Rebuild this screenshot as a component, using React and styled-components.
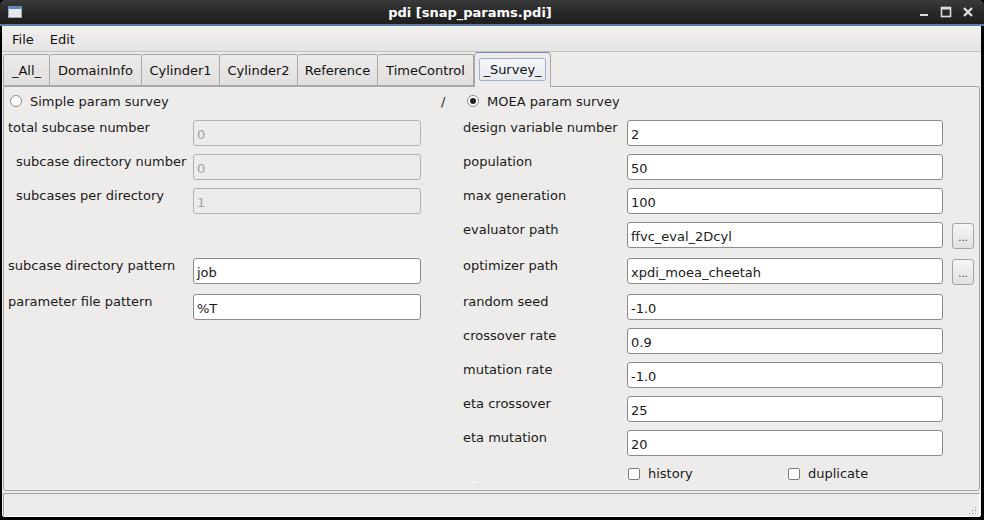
import React from "react";
import styled, { createGlobalStyle } from "styled-components";

const Global = createGlobalStyle`
  html, body { margin: 0; padding: 0; background: #000; }
  body { font-family: "DejaVu Sans", "Liberation Sans", sans-serif; font-size: 13px; color: #1a1a1a; }
  * { box-sizing: border-box; }
`;

const Window = styled.div`
  width: 984px;
  height: 520px;
  display: flex;
  flex-direction: column;
  background: #000;
  padding: 0 3px 4px 2px;
  overflow: hidden;
`;

const TitleBar = styled.div`
  height: 26px;
  flex: none;
  margin: 0 -3px 0 -2px;
  border-radius: 5px 5px 0 0;
  background: linear-gradient(#3a3a3a, #262626 60%, #1e1e1e);
  border-bottom: 2px solid #5a7aa0;
  display: flex;
  align-items: center;
  color: #fff;
`;

const AppIcon = styled.div`
  width: 14px;
  height: 12px;
  margin-left: 8px;
  border: 1px solid #9ab;
  border-top: 3px solid #5b86c4;
  background: #e8e8e8;
  flex: none;
`;

const Title = styled.div`
  flex: 1;
  text-align: center;
  font-weight: bold;
  font-size: 13px;
  padding-top: 1px;
`;

const Controls = styled.div`
  display: flex;
  gap: 10px;
  align-items: center;
  margin-right: 10px;
`;

const Body = styled.div`
  flex: 1;
  background: #edeceb;
  display: flex;
  flex-direction: column;
  min-height: 0;
`;

const MenuBar = styled.div`
  height: 26px;
  flex: none;
  display: flex;
  align-items: center;
  padding-left: 2px;
  padding-top: 1px;
  background: linear-gradient(#f1f0ef, #e5e4e2);
  border-bottom: 1px solid #c3c2c0;
`;

const MenuItem = styled.div`
  padding: 0 8px;
  font-size: 13px;
  color: #111;
`;

const TabBar = styled.div`
  display: flex;
  align-items: flex-end;
  padding-left: 1px;
  height: 34px;
  flex: none;
  position: relative;
  z-index: 1;
`;

const Tab = styled.div`
  width: ${(p) => p.$w}px;
  height: ${(p) => (p.$active ? "35px" : "32px")};
  margin-bottom: ${(p) => (p.$active ? "-1px" : "0")};
  padding: ${(p) => (p.$active ? "3px 4px 4px" : "1px 0 0")};
  display: flex;
  align-items: center;
  justify-content: center;
  border: 1px solid #a9a8a6;
  border-left-width: ${(p) => (p.$first || p.$active ? "1px" : "0")};
  border-bottom: ${(p) => (p.$active ? "none" : "1px solid #a9a8a6")};
  border-top-color: ${(p) => (p.$active ? "#6f8fb8" : "#a9a8a6")};
  border-radius: ${(p) => (p.$active ? "4px 4px 0 0" : "2px 2px 0 0")};
  background: ${(p) => (p.$active ? "#edeceb" : "linear-gradient(#ecebe9, #e1e0de)")};
  color: #111;
  white-space: nowrap;
`;

const FocusLabel = styled.div`
  border: 1px solid #9db3d0;
  border-radius: 2px;
  padding: 3px 3px;
  background: linear-gradient(#f3f5f8, #e7ebf0);
`;

const Pane = styled.div`
  margin: 0 1px 0 1px;
  height: 405px;
  flex: none;
  border: 1px solid #a9a8a6;
  border-radius: 0 3px 3px 3px;
  display: grid;
  grid-template-columns: 185px 228px 20px 22px 164px 316px 9px 22px;
  grid-template-rows: 32px 34px 34px 34px 36px 36px 34px 34px 34px 34px 34px 1fr;
  padding-left: 4px;
  padding-top: 1px;
`;

const Cell = styled.div`
  grid-column: ${(p) => p.$col};
  grid-row: ${(p) => p.$row};
  display: flex;
  align-items: flex-start;
  padding-left: ${(p) => p.$indent || 0}px;
  white-space: nowrap;
`;

const Header = styled(Cell)`
  align-items: center;
  padding-top: 2px;
  height: 22px;
  box-sizing: content-box;
`;

const Label = styled(Cell)`
  color: #1a1a1a;
`;

const Input = styled.div`
  width: ${(p) => p.$w}px;
  height: 26px;
  border: 1px solid ${(p) => (p.$disabled ? "#b4b3b1" : "#8c8b89")};
  border-radius: 3px;
  background: ${(p) => (p.$disabled ? "#edeceb" : "#fff")};
  color: ${(p) => (p.$disabled ? "#a3a2a0" : "#1a1a1a")};
  display: flex;
  align-items: center;
  padding: 2px 0 0 3px;
  font-size: 13px;
`;

const DotButton = styled.div`
  width: 22px;
  height: 26px;
  margin-top: 1px;
  border: 1px solid #a5a4a2;
  border-radius: 3px;
  background: linear-gradient(#f6f6f5, #e2e1df);
  display: flex;
  align-items: center;
  justify-content: center;
  font-size: 10px;
  color: #333;
  padding-top: 3px;
`;

const RadioCircle = styled.span`
  width: 12px;
  height: 12px;
  border-radius: 50%;
  border: 1px solid #8a8988;
  background: #fff;
  display: inline-flex;
  align-items: center;
  justify-content: center;
  margin-right: 8px;
  flex: none;
  &::after {
    content: "";
    width: 6px;
    height: 6px;
    border-radius: 50%;
    background: ${(p) => (p.$checked ? "#222" : "transparent")};
  }
`;

const Check = styled.span`
  width: 12px;
  height: 12px;
  border: 1px solid #7f7e7c;
  border-radius: 2px;
  background: #fff;
  margin-right: 8px;
  flex: none;
`;

const CheckRow = styled.div`
  grid-column: 6 / 9;
  grid-row: 12;
  display: flex;
  align-items: flex-start;
  padding-top: 2px;
  padding-left: 1px;
  position: relative;
`;

const CheckItem = styled.div`
  display: flex;
  align-items: center;
  width: ${(p) => p.$w}px;
`;

const Tick = styled.span`
  position: absolute;
  left: -156px;
  top: 18px;
  width: 6px;
  height: 1px;
  background: #fff;
`;

const StatusBar = styled.div`
  margin: 2px 1px 0 1px;
  height: 24px;
  flex: none;
  border: 1px solid #a3a2a0;
  border-right-color: #fff;
  border-bottom-color: #fff;
  position: relative;
`;

const Grip = styled.svg`
  position: absolute;
  right: 2px;
  bottom: 1px;
`;

const rightRows = [
  ["design variable number", "2"],
  ["population", "50"],
  ["max generation", "100"],
  ["evaluator path", "ffvc_eval_2Dcyl", true],
  ["optimizer path", "xpdi_moea_cheetah", true],
  ["random seed", "-1.0"],
  ["crossover rate", "0.9"],
  ["mutation rate", "-1.0"],
  ["eta crossover", "25"],
  ["eta mutation", "20"],
];

const leftRows = [
  { row: 2, label: "total subcase number", value: "0", indent: 0, disabled: true },
  { row: 3, label: "subcase directory number", value: "0", indent: 8, disabled: true },
  { row: 4, label: "subcases per directory", value: "1", indent: 8, disabled: true },
  { row: 6, label: "subcase directory pattern", value: "job", indent: 0 },
  { row: 7, label: "parameter file pattern", value: "%T", indent: 0 },
];

const tabs = [
  ["_All_", 47],
  ["DomainInfo", 92],
  ["Cylinder1", 78],
  ["Cylinder2", 78],
  ["Reference", 80],
  ["TimeControl", 96],
];

export default function App() {
  return (
    <>
      <Global />
      <Window>
        <TitleBar>
          <AppIcon />
          <Title>pdi [snap_params.pdi]</Title>
          <Controls>
            <svg width="12" height="12" viewBox="0 0 12 12">
              <rect x="2" y="8" width="8" height="2" fill="#ddd" />
            </svg>
            <svg width="12" height="12" viewBox="0 0 12 12">
              <rect x="1.5" y="1.5" width="9" height="9" fill="none" stroke="#ddd" strokeWidth="1.6" />
              <rect x="1.5" y="1.5" width="9" height="2" fill="#ddd" />
            </svg>
            <svg width="12" height="12" viewBox="0 0 12 12">
              <path d="M2 2 L10 10 M10 2 L2 10" stroke="#ddd" strokeWidth="2.4" />
            </svg>
          </Controls>
        </TitleBar>
        <Body>
          <MenuBar>
            <MenuItem>File</MenuItem>
            <MenuItem>Edit</MenuItem>
          </MenuBar>
          <TabBar>
            {tabs.map(([t, w], i) => (
              <Tab key={t} $w={w} $first={i === 0}>
                {t}
              </Tab>
            ))}
            <Tab $active $w={77}>
              <FocusLabel>_Survey_</FocusLabel>
            </Tab>
          </TabBar>
          <Pane>
            <Header $col="1" $row="1" $indent={2}>
              <RadioCircle />
              Simple param survey
            </Header>
            <Header $col="4" $row="1">
              /
            </Header>
            <Header $col="5" $row="1" $indent={4}>
              <RadioCircle $checked />
              MOEA param survey
            </Header>
            {leftRows.map((r) => (
              <React.Fragment key={r.label}>
                <Label $col="1" $row={r.row} $indent={r.indent}>
                  {r.label}
                </Label>
                <Cell $col="2" $row={r.row}>
                  <Input $w={229} $disabled={r.disabled}>
                    {r.value}
                  </Input>
                </Cell>
              </React.Fragment>
            ))}
            {rightRows.map(([label, value, btn], i) => (
              <React.Fragment key={label}>
                <Label $col="5" $row={i + 2}>
                  {label}
                </Label>
                <Cell $col="6" $row={i + 2}>
                  <Input $w={317}>{value}</Input>
                </Cell>
                {btn && (
                  <Cell $col="8" $row={i + 2}>
                    <DotButton>...</DotButton>
                  </Cell>
                )}
              </React.Fragment>
            ))}
            <CheckRow>
              <Tick />
              <CheckItem $w={160}>
                <Check />
                history
              </CheckItem>
              <CheckItem $w={120}>
                <Check />
                duplicate
              </CheckItem>
            </CheckRow>
          </Pane>
          <StatusBar>
            <Grip width="10" height="10" viewBox="0 0 10 10">
              {[
                [8, 2],
                [8, 5],
                [5, 5],
                [8, 8],
                [5, 8],
                [2, 8],
              ].map(([x, y]) => (
                <rect key={`${x}-${y}`} x={x} y={y} width="1" height="1" fill="#9a9998" />
              ))}
            </Grip>
          </StatusBar>
        </Body>
      </Window>
    </>
  );
}
